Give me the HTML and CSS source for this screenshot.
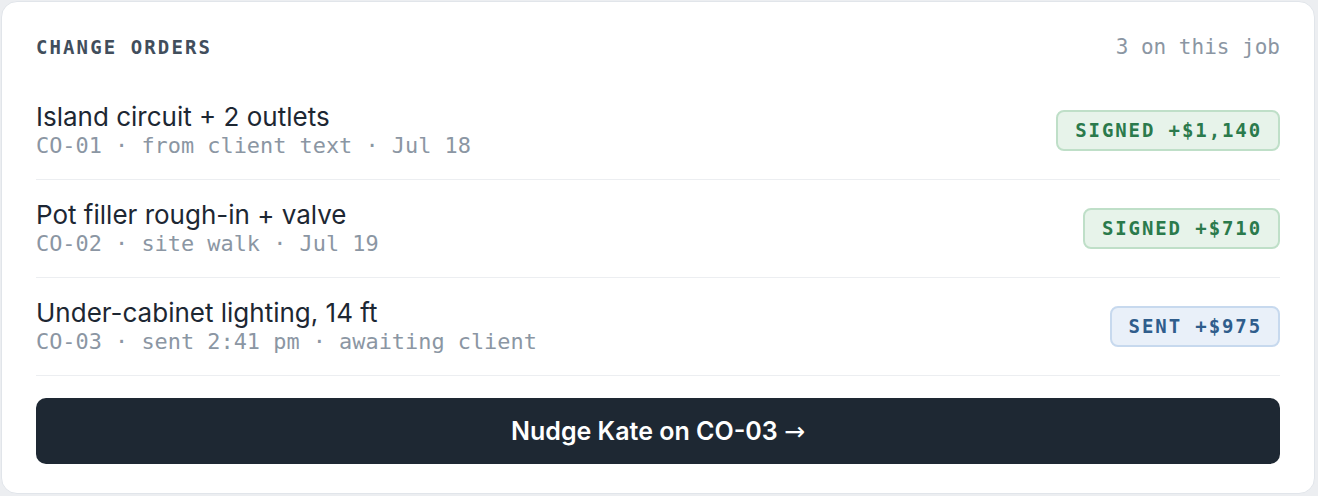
FILE: index.html
```html
<!DOCTYPE html>
<html>
	<head>
		<title>change orders</title>
		<link rel="stylesheet" href="styles.css">
	</head>
	<body>
		<div class="card">
			<div class="card-head">
				<span class="card-title">CHANGE ORDERS</span>
				<span class="card-count">3 on this job</span>
			</div>
			<div class="order">
				<div class="order-text">
					<div class="order-name">Island circuit + 2 outlets</div>
					<div class="order-meta">CO-01 · from client text · Jul 18</div>
				</div>
				<span class="badge signed">SIGNED +$1,140</span>
			</div>
			<div class="order">
				<div class="order-text">
					<div class="order-name">Pot filler rough-in + valve</div>
					<div class="order-meta">CO-02 · site walk · Jul 19</div>
				</div>
				<span class="badge signed">SIGNED +$710</span>
			</div>
			<div class="order">
				<div class="order-text">
					<div class="order-name">Under-cabinet lighting, 14 ft</div>
					<div class="order-meta">CO-03 · sent 2:41 pm · awaiting client</div>
				</div>
				<span class="badge sent">SENT +$975</span>
			</div>
			<button class="nudge">Nudge Kate on CO-03 <span class="arrow">→</span></button>
		</div>
	</body>
</html>
```
FILE: styles.css
```css
* {
	box-sizing: border-box;
}
html,body {
	width: 100%;
	height: 100%;
}
body {
	margin: 0;
	padding: 1px 3px 2px 1px;
	background-color: #eceef1;
	font-family: Inter, "Noto Sans", sans-serif;
}
.card {
	background-color: #ffffff;
	border: 1.5px solid #e1e5ea;
	border-radius: 16px;
	padding: 30px 34px 29px 34px;
}
.card-head {
	display: flex;
	justify-content: space-between;
	align-items: center;
	height: 30px;
	margin-bottom: 20px;
}
.card-title {
	font-family: "DejaVu Sans Mono", monospace;
	font-weight: bold;
	font-size: 19px;
	letter-spacing: 2.1px;
	color: #414e5c;
}
.card-count {
	font-family: "DejaVu Sans Mono", monospace;
	font-size: 21px;
	color: #8b96a3;
}
.order {
	display: flex;
	justify-content: space-between;
	align-items: center;
	height: 98px;
	border-bottom: 1px solid #eceef1;
}
.order-name {
	font-size: 26px;
	line-height: 30px;
	color: #1d2733;
}
.order-meta {
	font-family: "DejaVu Sans Mono", monospace;
	font-size: 21.9px;
	line-height: 28px;
	color: #8b96a3;
}
.badge {
	font-family: "DejaVu Sans Mono", monospace;
	font-weight: bold;
	font-size: 19px;
	letter-spacing: 1.9px;
	height: 41px;
	line-height: 37px;
	padding: 0 16px 0 17px;
	border: 2px solid;
	border-radius: 8px;
}
.signed {
	color: #2b7a4c;
	background-color: #e7f3ea;
	border-color: #bfdfc8;
}
.sent {
	color: #2f5d8c;
	background-color: #e9f0f9;
	border-color: #c7d9ee;
}
.nudge {
	display: block;
	width: 100%;
	height: 66px;
	margin-top: 22px;
	border: none;
	border-radius: 10px;
	background-color: #1e2833;
	color: #ffffff;
	font-family: Inter, sans-serif;
	font-weight: 600;
	font-size: 25px;
}
.arrow {
	font-family: "DejaVu Sans", sans-serif;
	font-weight: 400;
	font-size: 25px;
}
```
